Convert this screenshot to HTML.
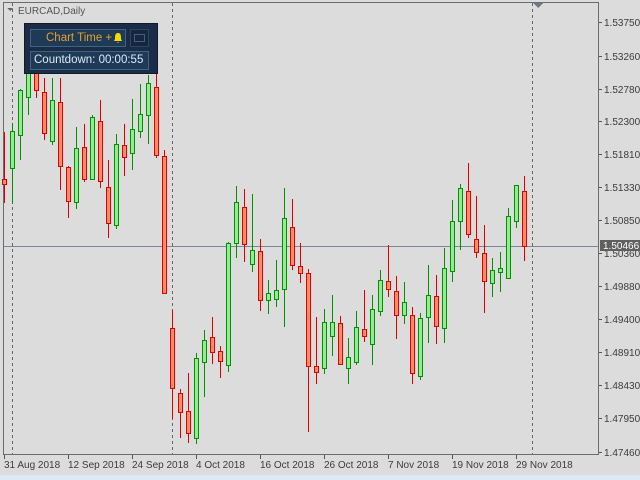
<!DOCTYPE html>
<html><head><meta charset="utf-8">
<style>
html,body{margin:0;padding:0;width:640px;height:480px;overflow:hidden;background:#dcdcdc;font-family:"Liberation Sans",sans-serif;}
svg{position:absolute;left:0;top:0;}
.ax{font-size:10px;fill:#3c3c3c;font-family:"Liberation Sans",sans-serif;}
#panel{position:absolute;left:24px;top:23px;width:134px;height:51px;background:#1b2c47;box-shadow:inset 0 0 0 1px #101a2c;}
.b1{position:absolute;left:6px;top:6px;width:94px;height:16px;border:1px solid #3e6482;background:#1f3a57;color:#e3a02a;font-size:11.5px;line-height:16px;white-space:nowrap;}
.b2{position:absolute;left:106px;top:6px;width:17px;height:16px;border:1px solid #2a4560;background:#16263e;}
.b3{position:absolute;left:6px;top:28px;width:117px;height:17px;border:1px solid #3e6482;background:#1f3a57;color:#dceaf8;font-size:11.5px;line-height:17px;white-space:nowrap;}
</style></head><body>
<svg width="640" height="480" shape-rendering="crispEdges">
<rect x="0" y="475" width="640" height="5" fill="#dde9f5"/>
<rect x="3.5" y="2.5" width="595" height="452" fill="none" stroke="#6c6c6c"/>
<line x1="12.5" y1="3" x2="12.5" y2="454" stroke="#666" stroke-dasharray="3,3"/>
<line x1="172.5" y1="3" x2="172.5" y2="454" stroke="#666" stroke-dasharray="3,3"/>
<line x1="532.5" y1="3" x2="532.5" y2="454" stroke="#666" stroke-dasharray="3,3"/>
<line x1="4" y1="246.5" x2="598" y2="246.5" stroke="#778899"/>
<polygon points="533,3 543,3 538,8" fill="#6b7a88"/>
<polygon points="7,8 13,8 10,11" fill="#666"/>
<text x="18" y="14" style="font-size:10px;fill:#555;font-family:'Liberation Sans',sans-serif">EURCAD,Daily</text>
<g id="c"></g>
<g id="ax"></g>
<rect x="600" y="240" width="40" height="11" fill="#5f5f5f"/>
<text x="603" y="249" style="font-size:10px;fill:#fff;font-family:'Liberation Sans',sans-serif">1.50466</text>
</svg>
<div id="panel">
<div class="b1"><span style="position:absolute;left:15px;">Chart Time +</span>
<svg width="10" height="12" style="position:absolute;left:82px;top:2px"><path d="M5 1 C2 1 2 4 2 7 L1 9 L9 9 L8 7 C8 4 8 1 5 1Z M4 10 L6 10 L5 11Z" fill="#f5dc00"/></svg></div>
<div class="b2"><svg width="17" height="16" style="position:absolute;left:0;top:0"><rect x="3.5" y="4.5" width="10" height="7" fill="none" stroke="#3c6280"/></svg></div>
<div class="b3"><span style="position:absolute;left:3px;">Countdown: 00:00:55</span></div>
</div>
<script>
var d=[[0,132,179,184,202],[1,123,131,168,203],[1,89,90,135,159],[1,50,60,97,114],[0,55,65,90,97],[0,78,92,133,139],[1,78,100,141,144],[0,78,102,166,189],[0,166,167,201,217],[1,127,148,202,208],[0,124,147,179,181],[1,115,117,179,179],[0,100,121,181,187],[0,160,187,223,237],[1,134,144,225,228],[0,124,145,157,175],[1,99,129,153,169],[1,84,114,131,137],[1,75,83,115,143],[0,58,87,155,157],[0,150,156,293,293],[0,310,328,388,418],[0,389,393,412,437],[0,373,411,433,442],[1,353,358,438,443],[1,330,340,362,396],[0,317,337,352,363],[0,346,351,361,377],[1,242,243,365,371],[1,186,202,243,257],[0,189,207,244,261],[1,194,250,264,271],[0,239,251,300,310],[1,280,293,300,313],[1,260,290,299,306],[1,188,218,289,326],[0,199,227,265,269],[0,243,266,273,282],[0,269,273,366,431],[0,317,366,372,383],[1,309,322,368,373],[1,295,322,336,355],[0,316,323,364,364],[1,338,357,368,383],[1,311,327,362,364],[0,290,329,336,341],[1,295,309,344,364],[1,270,280,311,315],[0,245,281,289,296],[0,276,291,315,338],[1,282,302,315,323],[0,307,315,373,383],[1,313,318,376,379],[1,265,295,317,342],[0,275,296,326,343],[1,248,268,328,342],[1,200,221,271,281],[1,184,188,221,249],[0,163,191,234,237],[0,196,239,252,257],[0,225,253,281,312],[1,258,270,283,296],[1,252,268,272,291],[1,208,216,278,278],[1,185,185,221,227],[0,176,191,246,260]];
var g=document.getElementById('c'),h='';
d.forEach(function(c,i){var x=4+8*i,col=c[0]?'#009000':'#e00000',f=c[0]?'#90ee90':'#ff8c69';
h+='<line x1="'+(x+0.5)+'" y1="'+c[1]+'" x2="'+(x+0.5)+'" y2="'+(c[4]+1)+'" stroke="'+col+'"/>';
h+='<rect x="'+(x-1.5)+'" y="'+(c[2]+0.5)+'" width="4" height="'+Math.max(1,c[3]-c[2])+'" fill="'+f+'" stroke="'+col+'"/>';});
g.innerHTML=h;
var a='',pr=['1.53750','1.53260','1.52780','1.52300','1.51810','1.51330','1.50850','1.50360','1.49880','1.49400','1.48910','1.48430','1.47950','1.47460'],py=[22,55.7,88.7,121.3,154.3,187,220,253,286,319,352,385,418,452];
pr.forEach(function(p,i){var y=Math.round(py[i]);a+='<line x1="599" y1="'+(y+0.5)+'" x2="602" y2="'+(y+0.5)+'" stroke="#555"/><text class="ax" x="604" y="'+(y+4)+'">'+p+'</text>';});
var dt=['31 Aug 2018','12 Sep 2018','24 Sep 2018','4 Oct 2018','16 Oct 2018','26 Oct 2018','7 Nov 2018','19 Nov 2018','29 Nov 2018'];
dt.forEach(function(t,i){var x=4+64*i;a+='<line x1="'+(x+0.5)+'" y1="455" x2="'+(x+0.5)+'" y2="459" stroke="#555"/><text class="ax" x="'+x+'" y="468">'+t+'</text>';});
document.getElementById('ax').innerHTML=a;
</script>
</body></html>
